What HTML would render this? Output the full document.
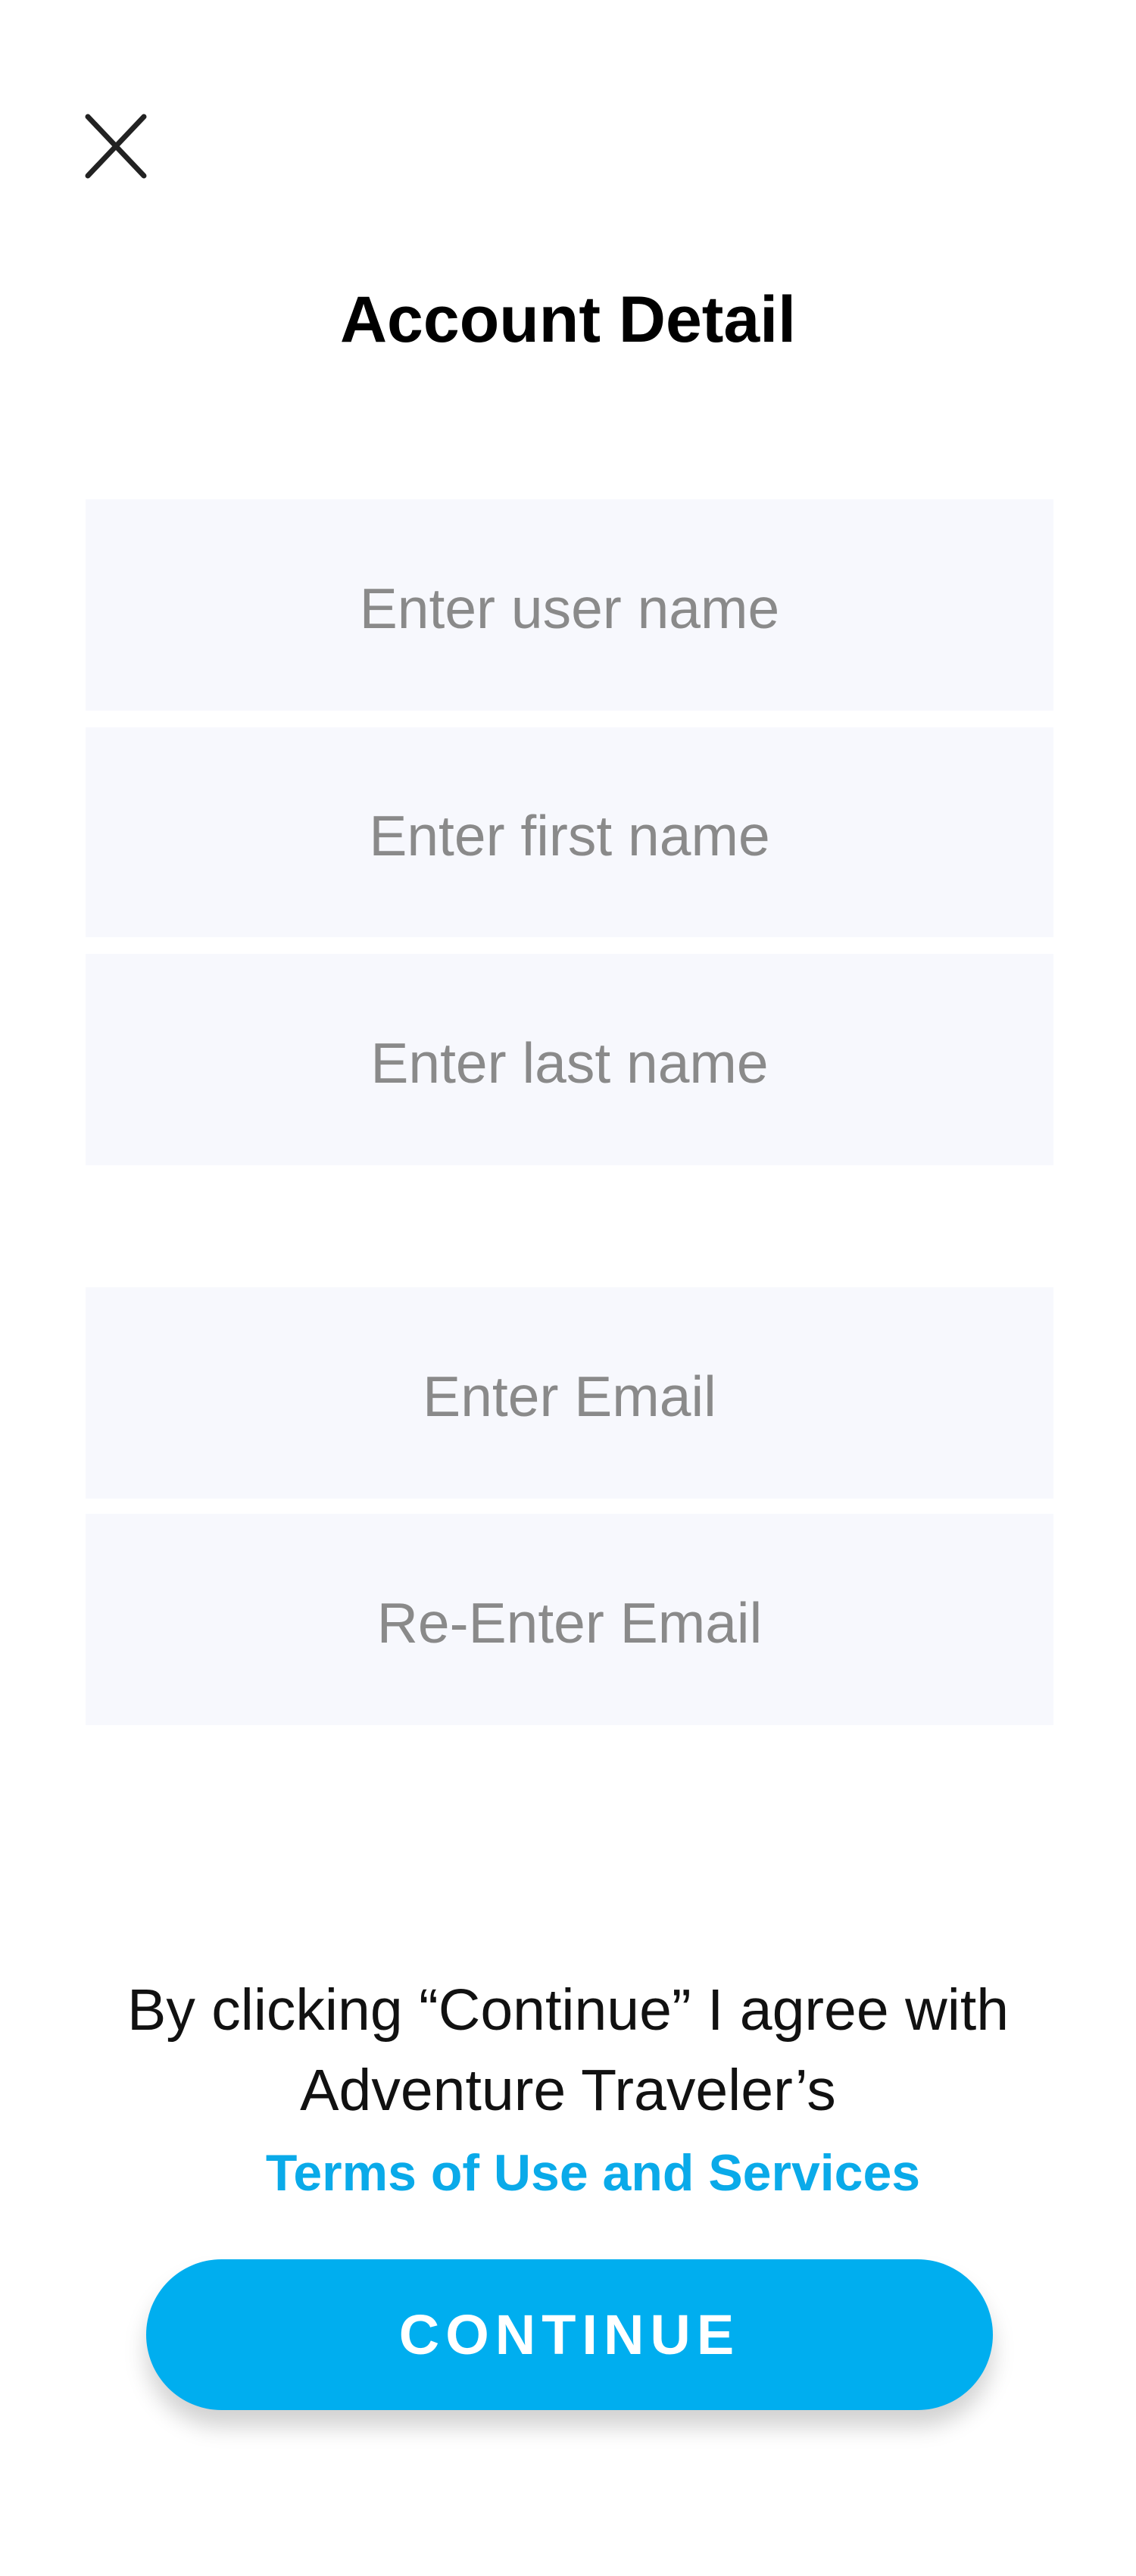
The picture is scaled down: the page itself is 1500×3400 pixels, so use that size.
<!DOCTYPE html>
<html><head><meta charset="utf-8"><style>
html,body{margin:0;padding:0;background:#fff;width:1500px;height:3400px;overflow:hidden;font-family:"Liberation Sans",sans-serif;}
.abs{position:absolute;}
.title{left:0;width:1500px;top:372px;text-align:center;font-weight:bold;font-size:86px;line-height:100px;color:#000;}
.f{position:absolute;left:113px;width:1278px;background:#f7f8fd;color:#8a8a8a;font-size:75px;text-align:center;display:flex;align-items:center;justify-content:center;padding-top:8px;box-sizing:border-box;}
.terms{left:0;width:1500px;text-align:center;font-size:77px;color:#111;line-height:106px;top:2600px;}
.btn{left:193px;top:2982px;width:1118px;height:199px;border-radius:100px;background:#00aeef;color:#fff;font-weight:bold;font-size:74px;letter-spacing:8px;display:flex;align-items:center;justify-content:center;box-shadow:0 22px 30px rgba(0,0,0,0.18);}
</style></head><body>
<svg class="abs" style="left:108px;top:148px" width="90" height="90" viewBox="0 0 90 90"><path d="M8 6 L82 84 M82 6 L8 84" stroke="#222" stroke-width="7" stroke-linecap="round" fill="none"/></svg>
<div class="abs title">Account Detail</div>
<div class="f" style="top:659px;height:279px">Enter user name</div>
<div class="f" style="top:960px;height:277px">Enter first name</div>
<div class="f" style="top:1259px;height:279px">Enter last name</div>
<div class="f" style="top:1699px;height:279px">Enter Email</div>
<div class="f" style="top:1998px;height:279px">Re-Enter Email</div>
<div class="abs terms">By clicking “Continue” I agree with<br>Adventure Traveler’s<br><span style="color:#0aaae9;font-weight:bold;font-size:68px;padding-left:66px">Terms of Use and Services</span></div>
<div class="abs btn">CONTINUE</div>
</body></html>
